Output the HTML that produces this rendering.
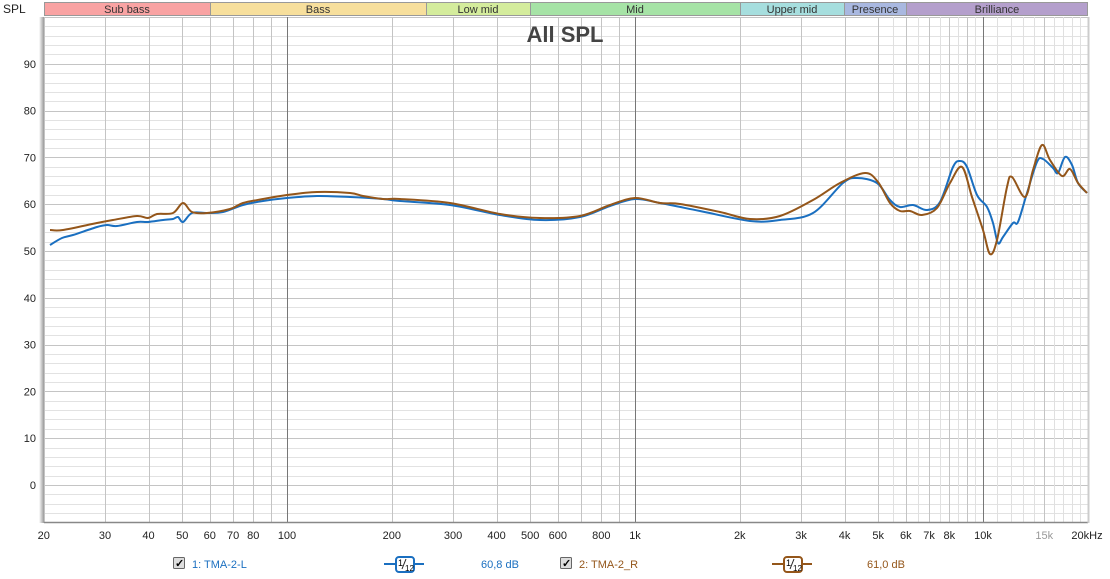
<!DOCTYPE html>
<html><head><meta charset="utf-8"><style>
body{margin:0;background:#fff;width:1110px;height:579px;overflow:hidden;font-family:"Liberation Sans",sans-serif}
svg{position:absolute;left:0;top:0}
</style></head><body>
<svg id="s" width="1110" height="579" xmlns="http://www.w3.org/2000/svg" font-family="Liberation Sans, sans-serif">
<defs><linearGradient id="sh" x1="0" x2="1"><stop offset="0" stop-color="#fff"/><stop offset="1" stop-color="#999"/></linearGradient></defs>
<rect x="44" y="17" width="1044" height="505" fill="#fff"/>
<g id="grid"></g>
<rect x="39" y="17" width="5" height="506" fill="url(#sh)"/>
<line x1="44" y1="522.5" x2="1088" y2="522.5" stroke="#888" stroke-width="1.5"/>
<line x1="1088.5" y1="17" x2="1088.5" y2="523" stroke="#ccc" stroke-width="2"/>
<g font-size="11" text-anchor="middle" fill="#333">
<rect x="44.5" y="2.5" width="166" height="13" fill="#f9a3a3" stroke="#999"/><text x="127" y="13">Sub bass</text>
<rect x="210.5" y="2.5" width="216" height="13" fill="#f7df9c" stroke="#999"/><text x="318" y="13">Bass</text>
<rect x="426.5" y="2.5" width="104" height="13" fill="#d4ec9c" stroke="#999"/><text x="478" y="13">Low mid</text>
<rect x="530.5" y="2.5" width="210" height="13" fill="#a6e3a6" stroke="#999"/><text x="635" y="13">Mid</text>
<rect x="740.5" y="2.5" width="104" height="13" fill="#a6dede" stroke="#999"/><text x="792" y="13">Upper mid</text>
<rect x="844.5" y="2.5" width="62" height="13" fill="#a9b8e0" stroke="#999"/><text x="875" y="13">Presence</text>
<rect x="906.5" y="2.5" width="181" height="13" fill="#b49fcc" stroke="#999"/><text x="997" y="13">Brilliance</text>
</g>
<text x="3" y="13" font-size="12" fill="#222">SPL</text>
<text x="565" y="42" font-size="22" font-weight="bold" fill="#444" text-anchor="middle">All SPL</text>
<g id="yl" font-size="11" fill="#222" text-anchor="end"></g>
<g id="xl" font-size="11" fill="#222" text-anchor="middle"></g>
<path id="pb" fill="none" stroke="#1a6fc0" stroke-width="2" stroke-linejoin="round"/>
<path id="pr" fill="none" stroke="#94561a" stroke-width="2" stroke-linejoin="round"/>
<g font-size="11">
<rect x="173.5" y="557.5" width="11" height="11" fill="#ddd" stroke="#666" rx="1"/><text x="175" y="567" font-size="11" font-weight="bold">✓</text>
<text x="192" y="568" fill="#1a6fc0">1: TMA-2-L</text>
<line x1="384" y1="564" x2="424" y2="564" stroke="#1a6fc0" stroke-width="2"/>
<rect x="396" y="557" width="18" height="15" rx="3" fill="#fff" stroke="#1a6fc0" stroke-width="2"/>
<text x="398" y="566" font-size="9">1</text><line x1="402" y1="569" x2="406" y2="559" stroke="#222"/><text x="405" y="571" font-size="8">12</text>
<text x="481" y="568" fill="#1a6fc0">60,8 dB</text>
<rect x="560.5" y="557.5" width="11" height="11" fill="#ddd" stroke="#666" rx="1"/><text x="562" y="567" font-size="11" font-weight="bold">✓</text>
<text x="579" y="568" fill="#94561a">2: TMA-2_R</text>
<line x1="772" y1="564" x2="812" y2="564" stroke="#94561a" stroke-width="2"/>
<rect x="784" y="557" width="18" height="15" rx="3" fill="#fff" stroke="#94561a" stroke-width="2"/>
<text x="786" y="566" font-size="9">1</text><line x1="790" y1="569" x2="794" y2="559" stroke="#222"/><text x="793" y="571" font-size="8">12</text>
<text x="867" y="568" fill="#94561a">61,0 dB</text>
</g>
</svg>
<script>
var NS="http://www.w3.org/2000/svg",g=document.getElementById('grid');
function L(a,b,c,d,col){var l=document.createElementNS(NS,'line');l.setAttribute('x1',a);l.setAttribute('y1',b);l.setAttribute('x2',c);l.setAttribute('y2',d);l.setAttribute('stroke',col);l.setAttribute('stroke-width',1);g.appendChild(l);}
function T(p,x,y,s,col){var t=document.createElementNS(NS,'text');t.setAttribute('x',x);t.setAttribute('y',y);if(col)t.setAttribute('fill',col);t.textContent=s;document.getElementById(p).appendChild(t);}
function X(f){return 287+348*Math.log10(f/100);}
for(var d=-6;d<=100;d+=2){var y=Math.round(485-4.68*d)+0.5;L(44,y,1088,y,d%10==0?'#c4c4c4':'#e2e2e2');}
for(var d=0;d<=90;d+=10){T('yl',36,485-4.68*d+4,d);}
var fs=[];for(var f=20;f<=100;f+=10)fs.push(f);for(f=200;f<=1000;f+=100)fs.push(f);for(f=2000;f<=10000;f+=1000)fs.push(f);for(f=5500;f<10000;f+=1000)fs.push(f);for(f=11000;f<=20000;f+=1000)fs.push(f);
fs.forEach(function(f){var x=Math.round(X(f))+0.5;var dec=(f==100||f==1000||f==10000);L(x,17,x,522,dec?'#777':(f>5000&&f%1000!=0||f>10000&&f!=15000&&f!=20000?'#e0e0e0':'#c4c4c4'));});
var lab=[[20,'20'],[30,'30'],[40,'40'],[50,'50'],[60,'60'],[70,'70'],[80,'80'],[100,'100'],[200,'200'],[300,'300'],[400,'400'],[500,'500'],[600,'600'],[800,'800'],[1000,'1k'],[2000,'2k'],[3000,'3k'],[4000,'4k'],[5000,'5k'],[6000,'6k'],[7000,'7k'],[8000,'8k'],[10000,'10k'],[15000,'15k'],[20000,'20kHz']];
lab.forEach(function(a){var x=X(a[0]);if(a[0]==20000)x=1087;T('xl',x,539,a[1],a[0]==15000?'#999':null);});
function cr(s){var p=s.trim().split(/\s+/).map(function(q){return q.split(',').map(Number);});var d='M'+p[0];for(var i=0;i<p.length-1;i++){var a=p[i-1]||p[i],b=p[i],c=p[i+1],e=p[i+2]||c;d+=' C'+(b[0]+(c[0]-a[0])/6)+','+(b[1]+(c[1]-a[1])/6)+' '+(c[0]-(e[0]-b[0])/6)+','+(c[1]-(e[1]-b[1])/6)+' '+c[0]+','+c[1];}return d;}
document.getElementById('pb').setAttribute('d',cr("50,245 62,238 73,235 97,227 107,225 117,226 137,222 148,222 163,220 173,219 178,217 183,222 192,213 207,213 223,212 243,205 263,201 287,198 317,196 350,197 383,199 400,201 450,205 500,215 540,220 580,217 610,206 635,199 660,203 700,211 750,221 780,220 813,213 843,183 857,178 877,183 890,200 900,207 913,205 927,210 940,202 953,167 960,161 967,167 977,195 987,207 993,223 998,243 1003,237 1013,223 1018,222 1027,193 1037,162 1043,159 1053,168 1058,173 1065,157 1072,165 1078,183 1087,193"));
document.getElementById('pr').setAttribute('d',cr("50,230 63,230 97,223 113,220 137,216 148,218 157,214 173,213 183,203 192,212 207,213 230,209 243,203 263,199 287,195 317,192 350,193 363,196 383,199 400,199 450,203 500,214 540,218 580,216 610,205 635,198 660,203 680,204 720,212 750,219 780,216 813,200 840,183 865,173 878,182 890,203 900,211 910,211 922,215 937,208 950,183 962,167 972,197 983,230 990,254 997,240 1007,187 1012,177 1025,197 1033,170 1042,145 1050,160 1062,176 1070,169 1078,183 1087,193"));
</script>
</body></html>
